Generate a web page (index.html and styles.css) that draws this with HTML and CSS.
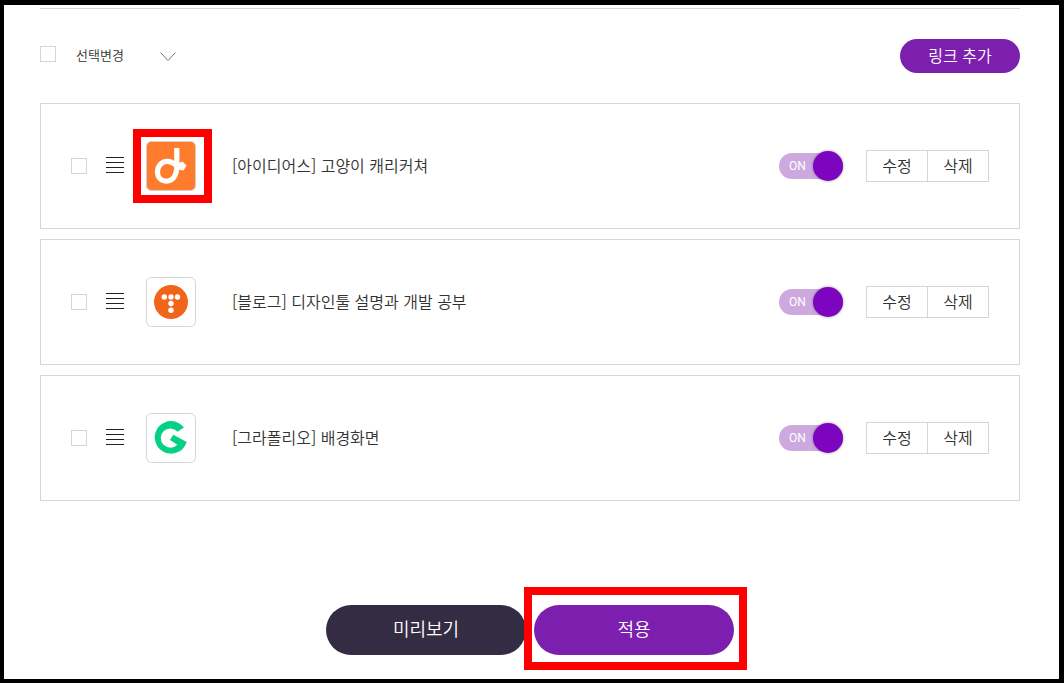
FILE: index.html
```
<!DOCTYPE html>
<html lang="ko">
<head>
  <meta charset="UTF-8">
  <meta name="viewport" content="width=device-width, initial-scale=1">
  <title>링크 관리</title>
  <link rel="stylesheet" href="styles.css">
</head>
<body>
  <main class="page">
    <div class="toolbar">
      <input type="checkbox" class="check" aria-label="전체 선택">
      <div class="select-box">
        <select class="select" aria-label="선택변경">
          <option>선택변경</option>
        </select>
        <svg class="select-arrow" width="16" height="10" viewBox="0 0 16 10" fill="none" stroke="#777"><path d="M.5.5 8 8.500 15.500.5"/></svg>
      </div>
      <button type="button" class="btn-add">링크 추가</button>
    </div>

    <ul class="link-list">
      <li class="link-item">
        <input type="checkbox" class="check" id="link1">
        <svg class="handle" width="18" height="18" viewBox="0 0 18 18" fill="#222"><path d="M0 0h18v1H0zM0 5h18v1H0zM0 10h18v1H0zM0 15h18v1H0z"/></svg>
        <div class="thumb marked">
          <svg width="50" height="50" viewBox="0 0 50 50" fill="none">
            <rect x=".5" y=".5" width="49" height="49" rx="5" fill="#ff7b2e" stroke="#d9cdc6"/>
            <path d="M30.800 7v17.500C31 34 27 40.200 20.500 40.200c-5.500 0-9-4-9-9.200 0-6 4-10.700 10-10.700 5 0 7.500 3.500 11.500 5.200l4 1.700" stroke="#fff" stroke-width="5.200"/>
            <path d="M31 22.500 36.500 20.500 40.500 24.500 37.500 29.500 31 27.500z" fill="#fff"/>
          </svg>
        </div>
        <label class="link-title" for="link1">[아이디어스] 고양이 캐리커쳐</label>
        <label class="switch"><input type="checkbox" role="switch" checked><span>ON</span></label>
        <div class="actions">
          <button type="button">수정</button>
          <button type="button">삭제</button>
        </div>
      </li>

      <li class="link-item">
        <input type="checkbox" class="check" id="link2">
        <svg class="handle" width="18" height="18" viewBox="0 0 18 18" fill="#222"><path d="M0 0h18v1H0zM0 5h18v1H0zM0 10h18v1H0zM0 15h18v1H0z"/></svg>
        <div class="thumb">
          <svg width="50" height="50" viewBox="0 0 50 50">
            <rect x=".5" y=".5" width="49" height="49" rx="5" fill="#fff" stroke="#d5d5d5"/>
            <circle cx="25" cy="25" r="17" fill="#f26419"/>
            <g fill="#fff">
              <circle cx="18.300" cy="20" r="2.700"/>
              <circle cx="25" cy="20" r="2.700"/>
              <circle cx="31.500" cy="20" r="2.700"/>
              <circle cx="25" cy="26.500" r="2.700"/>
              <circle cx="25" cy="33.200" r="2.700"/>
            </g>
          </svg>
        </div>
        <label class="link-title" for="link2">[블로그] 디자인툴 설명과 개발 공부</label>
        <label class="switch"><input type="checkbox" role="switch" checked><span>ON</span></label>
        <div class="actions">
          <button type="button">수정</button>
          <button type="button">삭제</button>
        </div>
      </li>

      <li class="link-item">
        <input type="checkbox" class="check" id="link3">
        <svg class="handle" width="18" height="18" viewBox="0 0 18 18" fill="#222"><path d="M0 0h18v1H0zM0 5h18v1H0zM0 10h18v1H0zM0 15h18v1H0z"/></svg>
        <div class="thumb">
          <svg width="50" height="50" viewBox="0 0 50 50">
            <rect x=".5" y=".5" width="49" height="49" rx="5" fill="#fff" stroke="#d5d5d5"/>
            <path d="M38 14.500A16.300 16.300 0 1 0 40.500 29.500L40.700 29 27.300 21.700 24 27 31.300 31.700A9.600 9.600 0 1 1 31.500 18.700z" fill="#06d086"/>
          </svg>
        </div>
        <label class="link-title" for="link3">[그라폴리오] 배경화면</label>
        <label class="switch"><input type="checkbox" role="switch" checked><span>ON</span></label>
        <div class="actions">
          <button type="button">수정</button>
          <button type="button">삭제</button>
        </div>
      </li>
    </ul>

    <div class="footer">
      <button type="button" class="btn btn-preview">미리보기</button>
      <div class="apply marked">
        <button type="button" class="btn btn-apply">적용</button>
      </div>
    </div>
  </main>
</body>
</html>
```
FILE: styles.css
```
* {
  box-sizing: border-box;
}
body {
  margin: 0;
  min-height: 100vh;
  border: solid #000;
  border-width: 5px 5px 4px 4px;
  background: #fff;
  color: #333;
  font-family: "Noto Sans CJK KR", sans-serif;
  font-size: 16px;
  font-weight: 350;
  line-height: 24px;
}
button, select {
  font: inherit;
  color: inherit;
  padding: 0 0 2px;
  cursor: pointer;
}
svg {
  display: block;
}
.page {
  margin: 3px 39px 24px 36px;
  border-top: 1px solid #d5d5d5;
}

/* toolbar */
.toolbar {
  display: flex;
  align-items: center;
  padding: 30px 0;
}
.check {
  appearance: none;
  flex: none;
  width: 16px;
  height: 16px;
  margin: 0;
  border: 1px solid #d5d5d5;
  background: #fff;
}
.check:checked {
  background: #7c1fae;
}
.toolbar .check {
  margin-bottom: 4px;
}
.select-box {
  position: relative;
  width: 100px;
  margin-left: 20px;
}
.select {
  appearance: none;
  display: block;
  width: 100%;
  border: 0;
  background: none;
  font-size: 13px;
  line-height: 24px;
}
.select-arrow {
  position: absolute;
  top: 9px;
  right: 0;
  pointer-events: none;
}
.btn-add {
  width: 120px;
  height: 34px;
  margin-left: auto;
  border: 0;
  border-radius: 17px;
  background: #7c1fae;
  color: #fff;
}

/* links */
.link-list {
  display: grid;
  gap: 10px;
  margin: 0;
  padding: 0;
  list-style: none;
}
.link-item {
  display: flex;
  align-items: center;
  padding: 37px 30px;
  border: 1px solid #d5d5d5;
}
.handle {
  flex: none;
  margin-left: 19px;
}
.thumb {
  position: relative;
  flex: none;
  margin: 0 36px 0 22px;
}
.link-title {
  flex: 1;
  padding-bottom: 2px;
}
.switch {
  display: grid;
  align-items: center;
  width: 64px;
  height: 26px;
  margin-right: 23px;
  border-radius: 13px;
  background: #cda9e0;
  cursor: pointer;
}
.switch input, .switch span {
  grid-area: 1 / 1;
}
.switch input {
  appearance: none;
  justify-self: end;
  width: 30px;
  height: 30px;
  margin: -2px 0;
  border-radius: 50%;
  background: #7e05bf;
  box-shadow: 0 0 3px rgba(0,0,0,0.4);
}
.switch input:not(:checked) {
  justify-self: start;
}
.switch span {
  padding-left: 10px;
  color: #fff;
  font-family: Roboto, sans-serif;
  font-size: 12px;
  font-weight: 400;
}
.actions {
  display: flex;
  border: 1px solid #d5d5d5;
}
.actions button {
  width: 60px;
  height: 30px;
  border: 0;
  background: #fff;
}
.actions button + button {
  box-sizing: content-box;
  height: 28px;
  border-left: 1px solid #d5d5d5;
}

/* bottom buttons */
.footer {
  display: flex;
  justify-content: center;
  gap: 8px;
  margin-top: 104px;
}
.apply {
  position: relative;
}
.btn {
  width: 200px;
  height: 50px;
  padding-bottom: 4px;
  border: 0;
  border-radius: 25px;
  color: #fff;
  font-size: 18px;
}
.btn-preview {
  background: #342c42;
}
.btn-apply {
  background: #7c1fae;
}

/* red highlight boxes */
.marked::after {
  content: "";
  position: absolute;
  border: 8px solid #f00;
  pointer-events: none;
}
.thumb.marked::after {
  inset: -12px -16px -12px -13px;
}
.apply.marked::after {
  inset: -18px -13px -15px -10px;
}
```
